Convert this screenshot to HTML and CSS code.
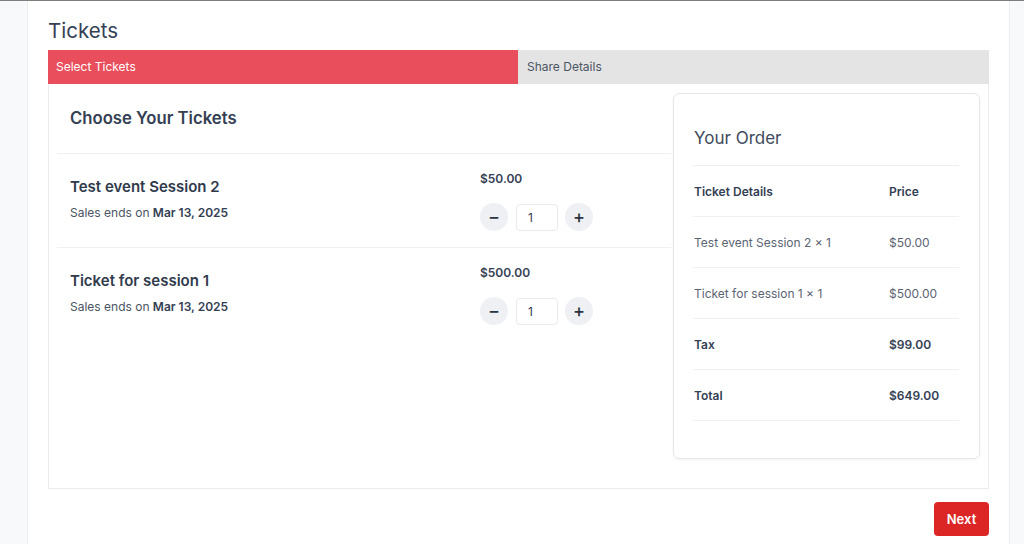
FILE: index.html
```html
<!DOCTYPE html>
<html lang="en">
<head>
<meta charset="utf-8">
<title>Tickets</title>
<link rel="stylesheet" href="styles.css">
</head>
<body>
<div class="shell">
  <h1 class="page-title">Tickets</h1>
  <div class="steps">
    <div class="step active">Select Tickets</div>
    <div class="step">Share Details</div>
  </div>
  <div class="box">
    <div class="tickets">
      <div class="tickets-head">Choose Your Tickets</div>
      <div class="ticket">
        <div class="info">
          <div class="t-name">Test event Session 2</div>
          <div class="t-sale">Sales ends on <b>Mar 13, 2025</b></div>
        </div>
        <div class="buy">
          <div class="price">$50.00</div>
          <div class="qty">
            <span class="qbtn">&minus;</span>
            <span class="qinput">1</span>
            <span class="qbtn">+</span>
          </div>
        </div>
      </div>
      <div class="ticket">
        <div class="info">
          <div class="t-name">Ticket for session 1</div>
          <div class="t-sale">Sales ends on <b>Mar 13, 2025</b></div>
        </div>
        <div class="buy">
          <div class="price">$500.00</div>
          <div class="qty">
            <span class="qbtn">&minus;</span>
            <span class="qinput">1</span>
            <span class="qbtn">+</span>
          </div>
        </div>
      </div>
    </div>
    <div class="order">
      <div class="order-title">Your Order</div>
      <div class="orow head"><span>Ticket Details</span><span>Price</span></div>
      <div class="orow"><span>Test event Session 2 × 1</span><span>$50.00</span></div>
      <div class="orow"><span>Ticket for session 1 × 1</span><span>$500.00</span></div>
      <div class="orow strong"><span>Tax</span><span>$99.00</span></div>
      <div class="orow strong last"><span>Total</span><span>$649.00</span></div>
    </div>
  </div>
  <div class="actions">
    <button class="next">Next</button>
  </div>
</div>
</body>
</html>
```

FILE: styles.css
```css
* { box-sizing: border-box; }
html, body { margin: 0; padding: 0; }
body {
  background: #f8f9fb;
  border-top: 1px solid #7d7d7d;
  font-family: Inter, "Noto Sans", "Liberation Sans", sans-serif;
  color: #344054;
  height: 544px;
  overflow: hidden;
}
.shell {
  margin-left: 27px;
  width: 983px;
  height: 543px;
  background: #fff;
  border-left: 1px solid #eceef1;
  border-right: 1px solid #eceef1;
  padding: 0 20px;
}
.page-title {
  margin: 0;
  padding-top: 17px;
  height: 49px;
  font-size: 20.5px;
  line-height: 26px;
  font-weight: 400;
  color: #344054;
}
.steps {
  display: flex;
  height: 34px;
}
.step {
  flex: 1;
  background: #e4e4e4;
  color: #4b5563;
  font-size: 12px;
  line-height: 34px;
  padding-left: 9px;
}
.step.active {
  background: #e84e5b;
  color: #fff;
  padding-left: 8px;
}
.box {
  display: grid;
  grid-template-columns: 614px 307px;
  column-gap: 2px;
  align-items: start;
  border: 1px solid #e9ecef;
  border-top: none;
  padding: 9px 8px 29px;
}
.tickets-head {
  font-size: 16.7px;
  line-height: 24px;
  font-weight: 600;
  color: #344054;
  padding: 13px 13px 23px;
}
.ticket {
  display: grid;
  grid-template-columns: 410px 1fr;
  border-top: 1px solid #eef0f2;
  padding: 0 13px;
}
.info { padding: 22px 0 25px; }
.t-name {
  font-size: 15px;
  line-height: 22px;
  font-weight: 600;
  color: #2f3a4c;
}
.t-sale {
  margin-top: 6px;
  font-size: 12px;
  line-height: 18px;
  color: #4b5563;
}
.t-sale b { font-weight: 600; color: #344054; }
.buy { padding-top: 16px; }
.price {
  font-size: 12px;
  line-height: 18px;
  font-weight: 600;
  color: #344054;
}
.qty {
  display: flex;
  align-items: center;
  margin-top: 15px;
  height: 28px;
}
.qbtn {
  width: 28px;
  height: 28px;
  border-radius: 50%;
  background: #eef0f3;
  color: #2b3340;
  font-size: 18px;
  font-weight: 500;
  display: flex;
  align-items: center;
  justify-content: center;
  line-height: 1;
}
.qinput {
  width: 42px;
  height: 27px;
  margin: 0 7px 0 8px;
  border: 1px solid #e8eaee;
  border-radius: 4px;
  font-size: 12px;
  line-height: 25px;
  padding-left: 11px;
  color: #344054;
}
.order {
  border: 1px solid #e5e7eb;
  border-radius: 6px;
  box-shadow: 0 1px 3px rgba(0,0,0,0.05);
  padding: 31px 20px 37px 19px;
}
.order-title {
  font-size: 17px;
  line-height: 27px;
  color: #3f4a5c;
  margin-bottom: 13px;
  padding-left: 1px;
}
.orow {
  display: grid;
  grid-template-columns: 195px 1fr;
  height: 51px;
  align-items: center;
  border-top: 1px solid #eef0f2;
  font-size: 12px;
  color: #5b6473;
  padding-left: 1px;
}
.orow.head, .orow.strong {
  font-weight: 600;
  color: #344054;
}
.orow.last { border-bottom: 1px solid #eef0f2; height: 52px; }
.actions {
  display: flex;
  justify-content: flex-end;
  padding-top: 13px;
}
.next {
  width: 55px;
  height: 34px;
  border: none;
  border-radius: 4px;
  background: #dc2626;
  color: #fff;
  font-family: inherit;
  font-size: 13px;
  font-weight: 600;
}
```
